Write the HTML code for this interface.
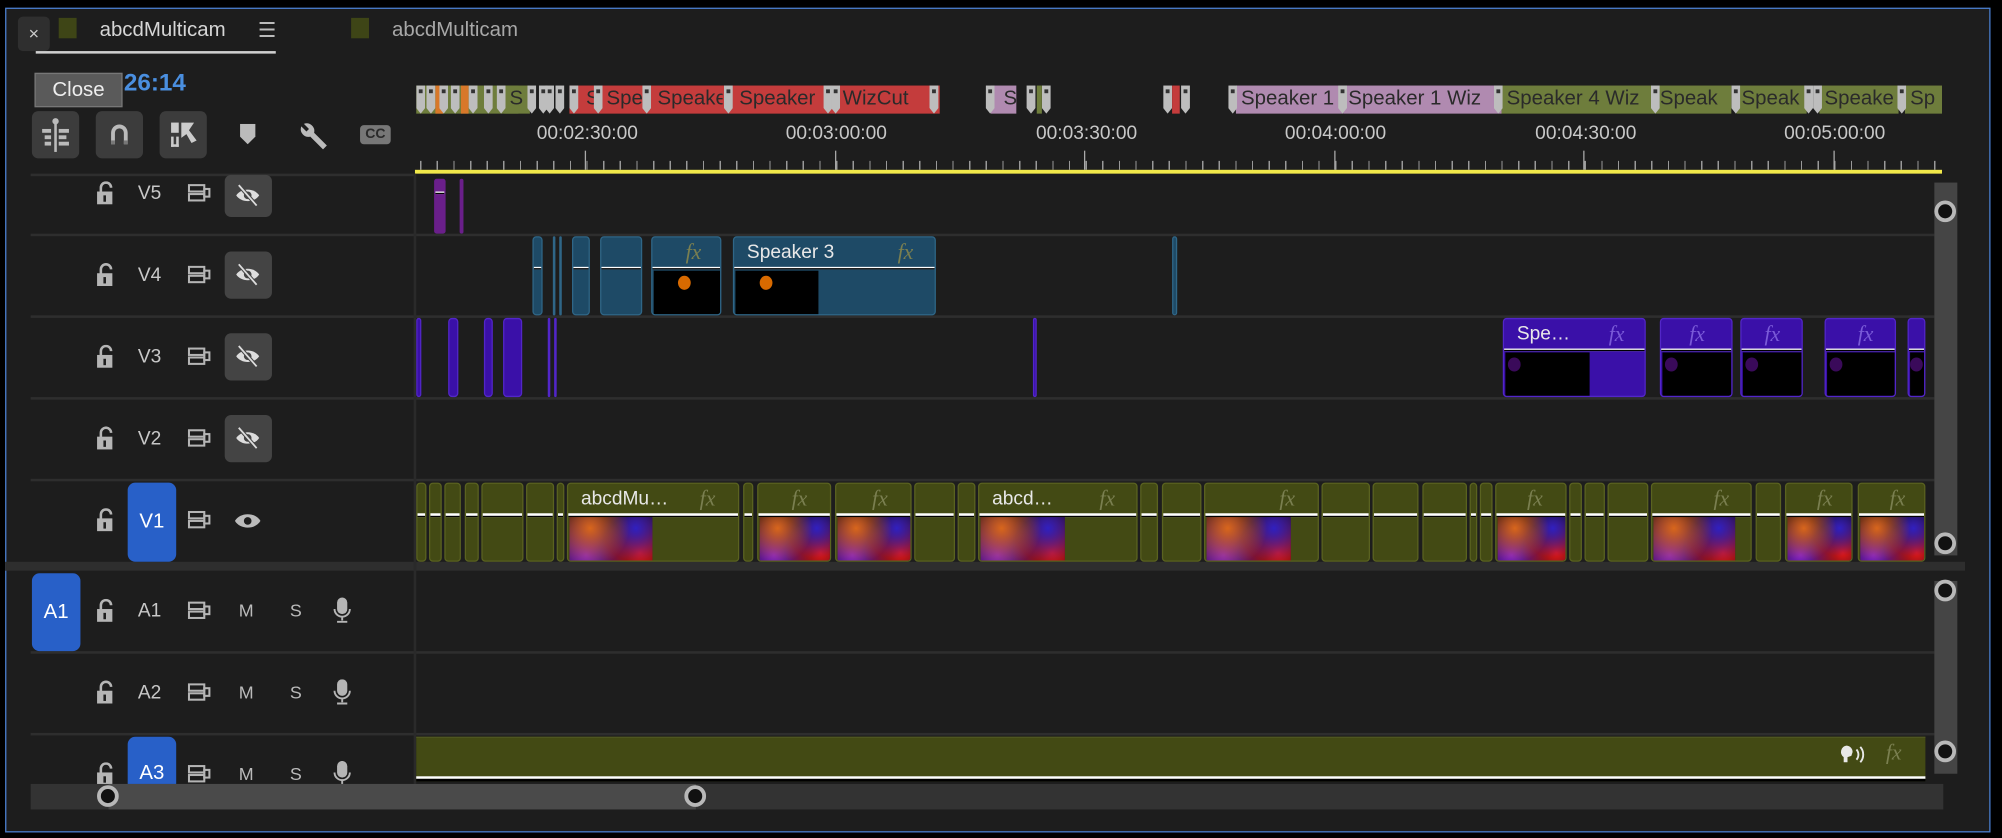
<!DOCTYPE html>
<html><head><meta charset="utf-8">
<style>
*{margin:0;padding:0;box-sizing:border-box}
body{width:2002px;height:838px;background:#000;overflow:hidden;font-family:"Liberation Sans",sans-serif}
#w{position:absolute;left:0;top:0;width:1568px;height:656px;transform:scale(1.27679);transform-origin:0 0}
.a{position:absolute}
#panel{left:4px;top:6px;width:1555px;height:646px;background:#1d1d1d;border:1px solid #4a7fd0}
.t{color:#d6d6d6;font-size:16px;white-space:nowrap}
.btn{position:absolute;background:#3c3c3c;border-radius:5px}
.row{position:absolute;left:24px;width:1491px;border-top:2px solid #2e2e2e}
.tc{position:absolute;top:96px;color:#c8c8c8;font-size:15px;width:100px;text-align:center;margin-left:-50px}
.mj{position:absolute;top:118px;width:1px;height:15px;background:#aaa}
.mk{position:absolute;top:67px;height:22px}
.ml{position:absolute;top:67px;height:22px;font-size:16px;color:#2a2a2a;line-height:22px;overflow:hidden;white-space:nowrap;padding-left:4px}
.fl{position:absolute;top:67px;width:7px;height:22px;background:#bdbdbd;clip-path:polygon(0 0,100% 0,100% 80%,50% 100%,0 80%)}
.fl::after{content:"";position:absolute;left:2px;top:3px;width:3px;height:3px;background:#333}
.o{position:absolute;top:378px;height:62px;background:#434a14;border:1px solid #5a6220;border-radius:3px;overflow:hidden}
.o::before{content:"";position:absolute;left:0;right:0;top:23px;height:2px;background:#fff;border-bottom:1px solid #000}
.th{position:absolute;top:26px;height:35px;background:radial-gradient(circle at 25% 25%,#d8661c 0,rgba(216,102,28,0) 55%),radial-gradient(circle at 80% 25%,#3020c0 0,rgba(48,32,192,0) 45%),radial-gradient(circle at 85% 80%,#e01818 0,rgba(224,24,24,0) 50%),radial-gradient(circle at 20% 85%,#8020d0 0,rgba(128,32,208,0) 55%),#200818}
.th i{position:absolute;width:4px;height:8px;background:#9a8ab8}
.fx{position:absolute;top:2px;font-family:"Liberation Serif",serif;font-style:italic;font-size:17px;color:#7a7f50}
.nm{position:absolute;top:3px;left:10px;font-size:15px;color:#e8e8e8;white-space:nowrap}
.b{position:absolute;top:185px;height:62px;background:#1e4a66;border:1px solid #2f6687;border-radius:3px;overflow:hidden}
.p{position:absolute;top:249px;height:62px;background:#3a10a8;border:1px solid #5226c8;border-radius:3px;overflow:hidden}
.v5{position:absolute;top:140px;height:43px;background:#6a1f8a;border-radius:2px}
.wl{position:absolute;left:0;right:0;top:23px;height:2px;background:#fff;border-bottom:1px solid #000}
.blk{position:absolute;top:26px;height:36px;background:#000}
.dot{position:absolute;width:10px;height:11px;border-radius:50%}
.ic{position:absolute;color:#bbb;font-size:14px}
.knob{position:absolute;width:17px;height:17px;border-radius:50%;background:#111;border:3px solid #b8b8b8}
.blue{position:absolute;background:#2860c8;border-radius:6px;color:#fff;font-size:16px;text-align:center}
</style></head><body><div id="w">
<div id="panel" class="a"></div>
<!-- tabs -->
<div class="a" style="left:14px;top:13px;width:25px;height:27px;background:#2f2f2f;border-radius:4px;color:#ccc;font-size:14px;text-align:center;line-height:26px">×</div>
<div class="a" style="left:46px;top:14px;width:14px;height:16px;background:#3e4516"></div>
<div class="a t" style="left:78px;top:15px">abcdMulticam</div>
<div class="a t" style="left:202px;top:14px;color:#bbb">☰</div>
<div class="a" style="left:28px;top:40px;width:188px;height:2px;background:#cfcfcf"></div>
<div class="a" style="left:275px;top:14px;width:14px;height:16px;background:#3e4516"></div>
<div class="a t" style="left:307px;top:15px;color:#a8a8a8">abcdMulticam</div>
<!-- timecode/close -->
<div class="a" style="left:97px;top:55px;color:#4a8fe0;font-size:19px;font-weight:bold">26:14</div>
<div class="a" style="left:27px;top:57px;width:69px;height:27px;background:#5a5a5a;border:1px solid #777;color:#eee;font-size:16px;text-align:center;line-height:25px">Close</div>
<!-- tool buttons -->
<div class="btn" style="left:25px;top:87px;width:37px;height:37px"><svg width="37" height="37"><g fill="#bbb"><rect x="17.5" y="6" width="2" height="26"/><rect x="8" y="14" width="7" height="3"/><rect x="21" y="14" width="8" height="3"/><rect x="10" y="19" width="5" height="3"/><rect x="21" y="19" width="6" height="3"/><rect x="10" y="24" width="5" height="3"/><rect x="21" y="24" width="8" height="3"/><circle cx="18.5" cy="8" r="2.5"/></g></svg></div>
<div class="btn" style="left:75px;top:87px;width:37px;height:37px"><svg width="37" height="37"><path d="M12 26V17a6.5 6.5 0 0 1 13 0v9h-3v-9a3.5 3.5 0 0 0-7 0v9z" fill="#bbb"/><rect x="12" y="23" width="3" height="3" fill="#777"/><rect x="22" y="23" width="3" height="3" fill="#777"/></svg></div>
<div class="btn" style="left:125px;top:87px;width:37px;height:37px"><svg width="37" height="37"><g fill="#ccc"><rect x="9" y="9" width="6" height="8"/><path d="M17 9h10l-4 6 6 8-4 2-4-7-4 3z"/><rect x="9" y="20" width="2" height="8"/><rect x="9" y="26" width="6" height="2"/><rect x="13" y="20" width="2" height="8"/></g></svg></div>
<svg class="a" style="left:188px;top:97px" width="13" height="16"><path d="M0 0h12v10l-6 6-6-6z" fill="#bbb"/></svg>
<svg class="a" style="left:232px;top:94px" width="25" height="24"><path d="M4 5a6 6 0 0 0 7 8l10 10 3-3-10-10a6 6 0 0 0-8-7l4 4-2 2z" fill="#bbb"/></svg>
<div class="a" style="left:282px;top:98px;width:24px;height:15px;background:#777;border-radius:3px;color:#2a2a2a;font-size:11px;font-weight:bold;text-align:center;line-height:15px">CC</div>
<!-- markers row -->
<div class="mk" style="left:326px;width:80px;background:#6e7d3c"></div>
<div class="mk" style="left:341px;width:6px;background:#d8782a"></div>
<div class="mk" style="left:361px;width:6px;background:#d8782a"></div>
<div class="mk" style="left:446px;width:290px;background:#c43c3c"></div>
<div class="ml" style="left:395px;width:20px;background:#6e7d3c">S</div>
<div class="ml" style="left:455px;width:12px">S</div>
<div class="ml" style="left:471px;width:35px">Spe</div>
<div class="ml" style="left:511px;width:55px">Speake</div>
<div class="ml" style="left:575px;width:70px">Speaker</div>
<div class="ml" style="left:656px;width:80px">WizCut</div>
<div class="mk" style="left:776px;width:20px;background:#b08ab0"></div>
<div class="ml" style="left:782px;width:14px">S</div>
<div class="mk" style="left:812px;width:4px;background:#6e7d3c"></div>
<div class="mk" style="left:918px;width:6px;background:#c43c3c"></div>
<div class="ml" style="left:968px;width:84px;background:#b08ab0">Speaker 1</div>
<div class="ml" style="left:1052px;width:124px;background:#b08ab0">Speaker 1 Wiz</div>
<div class="ml" style="left:1176px;width:120px;background:#6e7d3c">Speaker 4 Wiz</div>
<div class="ml" style="left:1296px;width:60px;background:#6e7d3c">Speak</div>
<div class="ml" style="left:1360px;width:55px;background:#6e7d3c">Speak</div>
<div class="ml" style="left:1425px;width:62px;background:#6e7d3c">Speake</div>
<div class="ml" style="left:1492px;width:29px;background:#6e7d3c">Sp</div>
<div class="fl" style="left:326px"></div><div class="fl" style="left:334px"></div><div class="fl" style="left:344px"></div><div class="fl" style="left:353px"></div><div class="fl" style="left:367px"></div><div class="fl" style="left:379px"></div><div class="fl" style="left:389px"></div><div class="fl" style="left:413px"></div><div class="fl" style="left:422px"></div><div class="fl" style="left:427px"></div><div class="fl" style="left:435px"></div><div class="fl" style="left:446px"></div><div class="fl" style="left:465px"></div><div class="fl" style="left:503px"></div><div class="fl" style="left:567px"></div><div class="fl" style="left:645px"></div><div class="fl" style="left:651px"></div><div class="fl" style="left:728px"></div><div class="fl" style="left:772px"></div><div class="fl" style="left:804px"></div><div class="fl" style="left:816px"></div><div class="fl" style="left:911px"></div><div class="fl" style="left:925px"></div><div class="fl" style="left:962px"></div><div class="fl" style="left:1048px"></div><div class="fl" style="left:1170px"></div><div class="fl" style="left:1293px"></div><div class="fl" style="left:1356px"></div><div class="fl" style="left:1413px"></div><div class="fl" style="left:1420px"></div><div class="fl" style="left:1486px"></div>
<!-- ruler -->
<div class="tc" style="left:460px">00:02:30:00</div>
<div class="tc" style="left:655px">00:03:00:00</div>
<div class="tc" style="left:851px">00:03:30:00</div>
<div class="tc" style="left:1046px">00:04:00:00</div>
<div class="tc" style="left:1242px">00:04:30:00</div>
<div class="tc" style="left:1437px">00:05:00:00</div>
<div class="a" style="left:326px;top:126px;width:1195px;height:7px;background:repeating-linear-gradient(90deg,transparent 0,transparent 3px,#999 3px,#999 4px,transparent 4px,transparent 13.03px)"></div>
<div class="mj" style="left:458px"></div><div class="mj" style="left:654px"></div><div class="mj" style="left:849px"></div><div class="mj" style="left:1045px"></div><div class="mj" style="left:1240px"></div><div class="mj" style="left:1436px"></div>
<div class="a" style="left:325px;top:133px;width:1196px;height:3px;background:#f2e94a"></div>
<!-- rows -->
<div class="a" style="left:24px;top:136px;width:301px;height:2px;background:#2e2e2e"></div>
<div class="row" style="top:183px"></div>
<div class="row" style="top:247px"></div>
<div class="row" style="top:311px"></div>
<div class="row" style="top:375px"></div>
<div class="a" style="left:4px;top:440px;width:1535px;height:7px;background:#2e2e2e"></div>
<div class="row" style="top:510px"></div>
<div class="row" style="top:574px"></div>
<div class="a" style="left:324px;top:136px;width:2px;height:478px;background:#2a2a2a"></div>
<!-- headers -->
<svg width="0" height="0" style="position:absolute"><defs>
<g id="lk"><path d="M3 9V5a4 4 0 0 1 8 0" stroke="#b5b5b5" stroke-width="2" fill="none"/><rect x="0" y="8" width="12" height="10" fill="#b5b5b5"/><rect x="5" y="11" width="2" height="5" fill="#1d1d1d"/></g>
<g id="sy" fill="none" stroke="#b5b5b5" stroke-width="1.6"><rect x="1" y="1" width="12" height="5"/><rect x="1" y="8" width="12" height="5"/><rect x="13" y="4" width="4" height="6"/></g>
<g id="ey"><path d="M2 9c4-6 14-6 18 0c-4 6-14 6-18 0z" fill="#ddd"/><circle cx="11" cy="9" r="3" fill="#444"/><path d="M4 1l14 16" stroke="#444" stroke-width="3"/><path d="M4 1l14 16" stroke="#ddd" stroke-width="1.4"/></g>
<g id="mc"><rect x="3" y="0" width="8" height="13" rx="4" fill="#b5b5b5"/><path d="M1 9a6 6 0 0 0 12 0M7 15v3M3 19h8" stroke="#b5b5b5" stroke-width="1.5" fill="none"/></g>
</defs></svg>
<!-- V5..V2 -->
<svg class="a" style="left:76px;top:142px" width="14" height="19"><use href="#lk"/></svg><div class="a t" style="left:108px;top:143px;color:#c8c8c8;font-size:15px">V5</div><svg class="a" style="left:147px;top:144px" width="19" height="15"><use href="#sy"/></svg>
<div class="btn" style="left:176px;top:137px;width:37px;height:33px;background:#444"><svg style="position:absolute;left:7px;top:7px" width="22" height="19"><use href="#ey"/></svg></div>
<svg class="a" style="left:76px;top:206px" width="14" height="19"><use href="#lk"/></svg><div class="a t" style="left:108px;top:207px;color:#c8c8c8;font-size:15px">V4</div><svg class="a" style="left:147px;top:208px" width="19" height="15"><use href="#sy"/></svg>
<div class="btn" style="left:176px;top:197px;width:37px;height:37px;background:#444"><svg style="position:absolute;left:7px;top:9px" width="22" height="19"><use href="#ey"/></svg></div>
<svg class="a" style="left:76px;top:270px" width="14" height="19"><use href="#lk"/></svg><div class="a t" style="left:108px;top:271px;color:#c8c8c8;font-size:15px">V3</div><svg class="a" style="left:147px;top:272px" width="19" height="15"><use href="#sy"/></svg>
<div class="btn" style="left:176px;top:261px;width:37px;height:37px;background:#444"><svg style="position:absolute;left:7px;top:9px" width="22" height="19"><use href="#ey"/></svg></div>
<svg class="a" style="left:76px;top:334px" width="14" height="19"><use href="#lk"/></svg><div class="a t" style="left:108px;top:335px;color:#c8c8c8;font-size:15px">V2</div><svg class="a" style="left:147px;top:336px" width="19" height="15"><use href="#sy"/></svg>
<div class="btn" style="left:176px;top:325px;width:37px;height:37px;background:#444"><svg style="position:absolute;left:7px;top:9px" width="22" height="19"><use href="#ey"/></svg></div>
<!-- V1 -->
<svg class="a" style="left:76px;top:398px" width="14" height="19"><use href="#lk"/></svg>
<div class="blue" style="left:100px;top:378px;width:38px;height:62px;line-height:62px">V1</div>
<svg class="a" style="left:147px;top:400px" width="19" height="15"><use href="#sy"/></svg>
<svg class="a" style="left:183px;top:400px" width="22" height="16"><path d="M1 8c4-7 16-7 20 0c-4 7-16 7-20 0z" fill="#bbb"/><circle cx="11" cy="8" r="3" fill="#1d1d1d"/></svg>
<!-- A1 -->
<div class="blue" style="left:25px;top:449px;width:38px;height:61px;line-height:61px">A1</div>
<svg class="a" style="left:76px;top:469px" width="14" height="19"><use href="#lk"/></svg><div class="a t" style="left:108px;top:470px;color:#c8c8c8;font-size:15px">A1</div><svg class="a" style="left:147px;top:471px" width="19" height="15"><use href="#sy"/></svg>
<div class="a t" style="left:187px;top:470px;color:#bbb;font-size:14px">M</div><div class="a t" style="left:227px;top:470px;color:#bbb;font-size:14px">S</div>
<svg class="a" style="left:261px;top:468px" width="14" height="20"><use href="#mc"/></svg>
<!-- A2 -->
<svg class="a" style="left:76px;top:533px" width="14" height="19"><use href="#lk"/></svg><div class="a t" style="left:108px;top:534px;color:#c8c8c8;font-size:15px">A2</div><svg class="a" style="left:147px;top:535px" width="19" height="15"><use href="#sy"/></svg>
<div class="a t" style="left:187px;top:534px;color:#bbb;font-size:14px">M</div><div class="a t" style="left:227px;top:534px;color:#bbb;font-size:14px">S</div>
<svg class="a" style="left:261px;top:532px" width="14" height="20"><use href="#mc"/></svg>
<!-- A3 (clipped) -->
<div class="a" style="left:24px;top:576px;width:300px;height:38px;overflow:hidden">
<svg class="a" style="left:52px;top:21px" width="14" height="19"><use href="#lk"/></svg>
<div class="blue" style="left:76px;top:1px;width:38px;height:50px;padding-top:20px">A3</div>
<svg class="a" style="left:123px;top:23px" width="19" height="15"><use href="#sy"/></svg>
<div class="a t" style="left:163px;top:22px;color:#bbb;font-size:14px">M</div><div class="a t" style="left:203px;top:22px;color:#bbb;font-size:14px">S</div>
<svg class="a" style="left:237px;top:20px" width="14" height="20"><use href="#mc"/></svg>
</div>
<!-- V5 clips -->
<div class="v5" style="left:340px;width:9px"><div style="position:absolute;left:1px;right:1px;top:10px;height:2px;background:#fff;border-bottom:1px solid #000"></div></div>
<div class="v5" style="left:360px;width:3px"></div>
<!-- V4 clips -->
<div class="b" style="left:417px;width:8px"><div class="wl"></div></div>
<div class="b" style="left:433px;width:2px"></div><div class="b" style="left:438px;width:2px"></div>
<div class="b" style="left:448px;width:14px"><div class="wl"></div></div>
<div class="b" style="left:470px;width:33px"><div class="wl"></div></div>
<div class="b" style="left:510px;width:55px"><div class="fx" style="left:26px">fx</div><div class="wl"></div><div class="blk" style="left:1px;width:52px"></div><div class="dot" style="left:20px;top:30px;background:#d86a00"></div></div>
<div class="b" style="left:574px;width:159px"><div class="nm">Speaker 3</div><div class="fx" style="left:128px">fx</div><div class="wl"></div><div class="blk" style="left:1px;width:65px"></div><div class="dot" style="left:20px;top:30px;background:#d86a00"></div></div>
<div class="b" style="left:918px;width:4px"></div>
<!-- V3 clips -->
<div class="p" style="left:326px;width:4px"></div><div class="p" style="left:351px;width:8px"></div><div class="p" style="left:379px;width:7px"></div><div class="p" style="left:394px;width:15px"></div><div class="p" style="left:429px;width:2px"></div><div class="p" style="left:434px;width:2px"></div><div class="p" style="left:809px;width:3px"></div>
<div class="p" style="left:1177px;width:112px"><div class="nm">Spe…</div><div class="fx" style="left:82px;color:#7a5ad8">fx</div><div class="wl"></div><div class="blk" style="left:1px;width:66px"></div><div class="dot" style="left:3px;top:30px;background:#3a0a5a"></div></div>
<div class="p" style="left:1300px;width:57px"><div class="fx" style="left:22px;color:#7a5ad8">fx</div><div class="wl"></div><div class="blk" style="left:1px;width:54px"></div><div class="dot" style="left:3px;top:30px;background:#3a0a5a"></div></div>
<div class="p" style="left:1363px;width:49px"><div class="fx" style="left:18px;color:#7a5ad8">fx</div><div class="wl"></div><div class="blk" style="left:1px;width:46px"></div><div class="dot" style="left:3px;top:30px;background:#3a0a5a"></div></div>
<div class="p" style="left:1429px;width:56px"><div class="fx" style="left:25px;color:#7a5ad8">fx</div><div class="wl"></div><div class="blk" style="left:1px;width:53px"></div><div class="dot" style="left:3px;top:30px;background:#3a0a5a"></div></div>
<div class="p" style="left:1494px;width:14px"><div class="wl"></div><div class="blk" style="left:1px;width:11px"></div><div class="dot" style="left:1px;top:30px;background:#3a0a5a"></div></div>
<!-- V1 clips -->
<div class="o" style="left:326px;width:8px"></div><div class="o" style="left:336px;width:10px"></div><div class="o" style="left:348px;width:13px"></div><div class="o" style="left:364px;width:11px"></div><div class="o" style="left:377px;width:33px"></div><div class="o" style="left:412px;width:22px"></div><div class="o" style="left:436px;width:6px"></div>
<div class="o" style="left:444px;width:135px"><div class="nm">abcdMu…</div><div class="fx" style="left:103px">fx</div><div class="th" style="left:1px;width:65px"></div></div>
<div class="o" style="left:582px;width:8px"></div>
<div class="o" style="left:593px;width:58px"><div class="fx" style="left:26px">fx</div><div class="th" style="left:1px;width:56px"></div></div>
<div class="o" style="left:654px;width:60px"><div class="fx" style="left:28px">fx</div><div class="th" style="left:1px;width:58px"></div></div>
<div class="o" style="left:716px;width:32px"></div><div class="o" style="left:750px;width:14px"></div>
<div class="o" style="left:766px;width:125px"><div class="nm">abcd…</div><div class="fx" style="left:94px">fx</div><div class="th" style="left:1px;width:66px"></div></div>
<div class="o" style="left:893px;width:14px"></div><div class="o" style="left:910px;width:31px"></div>
<div class="o" style="left:943px;width:90px"><div class="fx" style="left:58px">fx</div><div class="th" style="left:1px;width:66px"></div></div>
<div class="o" style="left:1035px;width:38px"></div><div class="o" style="left:1075px;width:36px"></div><div class="o" style="left:1114px;width:35px"></div><div class="o" style="left:1151px;width:6px"></div><div class="o" style="left:1159px;width:10px"></div>
<div class="o" style="left:1171px;width:56px"><div class="fx" style="left:24px">fx</div><div class="th" style="left:1px;width:54px"></div></div>
<div class="o" style="left:1229px;width:10px"></div><div class="o" style="left:1241px;width:16px"></div><div class="o" style="left:1259px;width:32px"></div>
<div class="o" style="left:1293px;width:79px"><div class="fx" style="left:48px">fx</div><div class="th" style="left:1px;width:64px"></div></div>
<div class="o" style="left:1375px;width:20px"></div>
<div class="o" style="left:1398px;width:53px"><div class="fx" style="left:24px">fx</div><div class="th" style="left:1px;width:51px"></div></div>
<div class="o" style="left:1455px;width:53px"><div class="fx" style="left:24px">fx</div><div class="th" style="left:1px;width:52px"></div></div>
<!-- A3 clip -->
<div class="a" style="left:326px;top:577px;width:1182px;height:35px;background:#434a14;border-top:1px solid #4e5620"></div>
<div class="a" style="left:326px;top:608px;width:1182px;height:2px;background:#fff"></div>
<div class="a" style="left:326px;top:610px;width:1182px;height:2px;background:#000"></div>
<svg class="a" style="left:1440px;top:583px" width="22" height="16"><path d="M6 1a5 5 0 0 1 5 5l-1 3-3 1v4H4v-4a5 5 0 0 1 2-9z" fill="#e8e8e8"/><path d="M14 4a6 6 0 0 1 0 8M17 2a9 9 0 0 1 0 12" stroke="#e8e8e8" stroke-width="1.5" fill="none"/></svg>
<div class="fx" style="left:1477px;top:580px">fx</div>
<!-- scrollbars -->
<div class="a" style="left:1515px;top:143px;width:18px;height:292px;background:#454545"></div>
<div class="a" style="left:1515px;top:455px;width:18px;height:151px;background:#454545"></div>
<div class="knob" style="left:1515px;top:157px"></div>
<div class="knob" style="left:1515px;top:417px"></div>
<div class="knob" style="left:1515px;top:454px"></div>
<div class="knob" style="left:1515px;top:580px"></div>
<div class="a" style="left:24px;top:614px;width:1498px;height:20px;background:#333"></div>
<div class="a" style="left:85px;top:614px;width:460px;height:20px;background:#4a4a4a"></div>
<div class="knob" style="left:76px;top:615px"></div>
<div class="knob" style="left:536px;top:615px"></div>
</div></body></html>
